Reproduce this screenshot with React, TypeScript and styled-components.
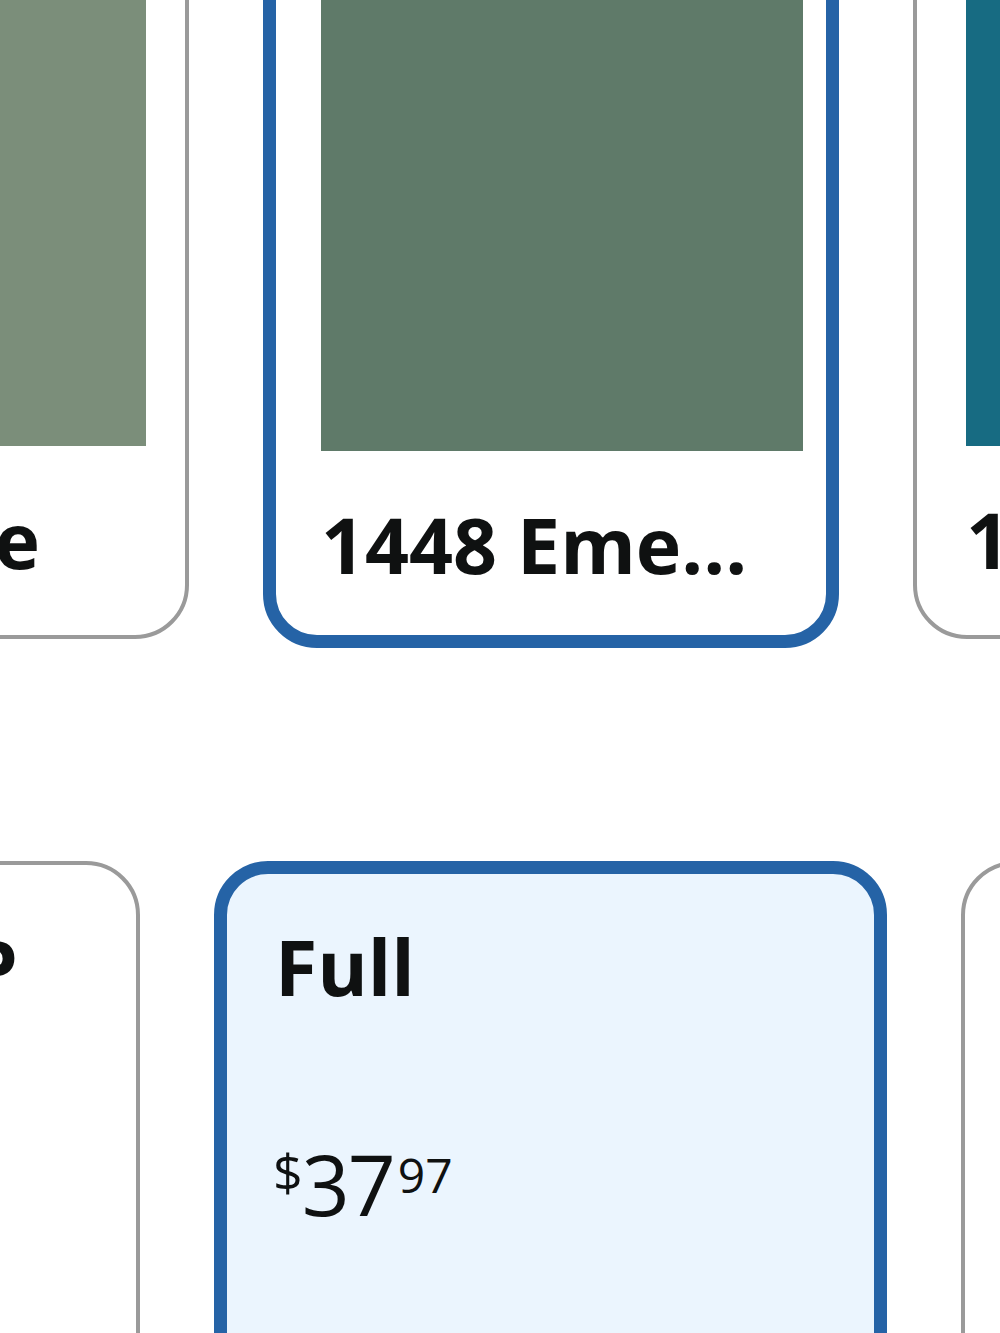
import React from "react";
import styled, { createGlobalStyle } from "styled-components";

const Global = createGlobalStyle`
  html, body {
    margin: 0;
    padding: 0;
    background: #ffffff;
    overflow: hidden;
  }
  body {
    font-family: "Open Sans", "Noto Sans", Arial, sans-serif;
    color: #0f1111;
  }
`;

const Page = styled.div`
  width: 1000px;
  height: 1333px;
  overflow: hidden;
  background: #ffffff;
`;

const Row = styled.div<{ $top: number; $left: number }>`
  display: flex;
  align-items: flex-start;
  gap: 74px;
  margin-top: ${(p) => p.$top}px;
  margin-left: ${(p) => p.$left}px;
`;

const Card = styled.div<{
  $selected?: boolean;
  $width: number;
  $pad: string;
  $tint?: boolean;
  $minHeight?: number;
}>`
  flex: none;
  box-sizing: border-box;
  width: ${(p) => p.$width}px;
  min-height: ${(p) => p.$minHeight ?? 0}px;
  padding: ${(p) => p.$pad};
  border: ${(p) => (p.$selected ? "13px solid #2563a6" : "4px solid #9a9a9a")};
  border-radius: 54px;
  background: ${(p) => (p.$tint ? "#ebf5fe" : "#ffffff")};
  display: flex;
  flex-direction: column;
`;

const Swatch = styled.div<{ $color: string }>`
  height: 552px;
  width: 100%;
  background: ${(p) => p.$color};
`;

const SwatchLabel = styled.div`
  margin-top: 49px;
  font-size: 77px;
  line-height: 90px;
  font-weight: 700;
  white-space: nowrap;
  overflow: hidden;
  color: #0f1111;
`;

const SizeLabel = styled.div`
  font-size: 77px;
  line-height: 90px;
  font-weight: 700;
  white-space: nowrap;
  color: #0f1111;
`;

const PriceRow = styled.div`
  display: flex;
  align-items: flex-start;
  margin-top: 130px;
  color: #0f1111;
  font-weight: 400;
`;

const PriceSymbol = styled.span`
  font-size: 52px;
  line-height: 52px;
  margin-top: 3px;
  margin-left: -2px;
  margin-right: -1px;
`;

const PriceWhole = styled.span`
  font-size: 84px;
  line-height: 84px;
  letter-spacing: -2px;
`;

const PriceFraction = styled.span`
  font-size: 48px;
  line-height: 48px;
  margin-top: 9px;
  margin-left: 4px;
`;

const colors = [
  { name: "1446 Sage", color: "#7b8e7a" },
  { name: "1448 Eme...", color: "#5f7a69", selected: true },
  { name: "1450 Teal", color: "#176b82" },
];

export default function App() {
  return (
    <Page>
      <Global />
      <Row $top={-150} $left={-387}>
        {colors.map((c) => (
          <Card
            key={c.name}
            $width={576}
            $selected={c.selected}
            $pad={c.selected ? "36px 23px 45px 45px" : "40px 39px 50px 49px"}
          >
            <Swatch $color={c.color} />
            <SwatchLabel>{c.name}</SwatchLabel>
          </Card>
        ))}
      </Row>
      <Row $top={213} $left={-393}>
        <Card $width={533} $pad="57px 48px 48px 48px" $minHeight={600}>
          <SizeLabel>Twin TOP</SizeLabel>
        </Card>
        <Card $width={673} $selected $tint $pad="48px 48px 48px 48px" $minHeight={600}>
          <SizeLabel>Full</SizeLabel>
          <PriceRow>
            <PriceSymbol>$</PriceSymbol>
            <PriceWhole>37</PriceWhole>
            <PriceFraction>97</PriceFraction>
          </PriceRow>
        </Card>
        <Card $width={673} $pad="57px 48px 48px 48px" $minHeight={600}>
          <SizeLabel>Queen</SizeLabel>
        </Card>
      </Row>
    </Page>
  );
}
